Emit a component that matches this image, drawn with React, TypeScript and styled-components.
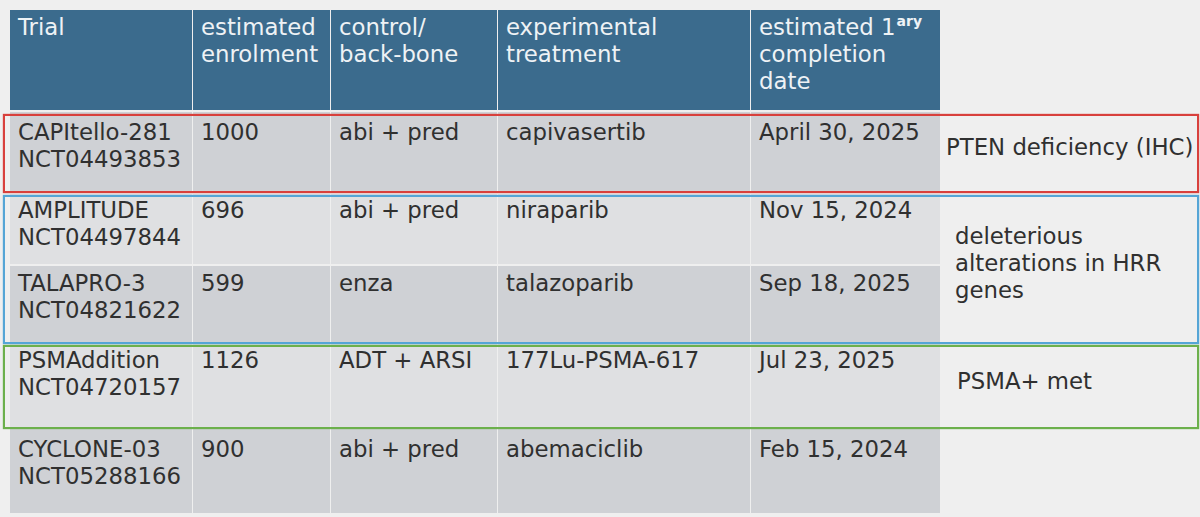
import React from "react";
import styled, { createGlobalStyle } from "styled-components";

const GlobalStyle = createGlobalStyle`
  html, body {
    margin: 0;
    padding: 0;
    background: #efefef;
  }
  body {
    font-family: "DejaVu Sans", Verdana, sans-serif;
    width: 1200px;
    height: 517px;
    overflow: hidden;
  }
`;

const Page = styled.div`
  padding: 10px 0 0 10px;
`;

const Grid = styled.div`
  display: grid;
  grid-template-columns: 182px 137px 166px 252px 189px 258px;
  grid-template-rows: 100px 80px 70px 76px 83px 84px;
  column-gap: 1px;
  row-gap: 2px;
  font-size: 22.8px;
  line-height: 27px;
`;

const HeadCell = styled.div<{ $col: number }>`
  grid-row: 1;
  grid-column: ${(p) => p.$col};
  background: #3b6b8d;
  color: #eef2f5;
  padding: 4px 8px;
  white-space: nowrap;
`;

const Cell = styled.div<{ $row: number; $col: number; $dark: boolean; $pt: number }>`
  grid-row: ${(p) => p.$row};
  grid-column: ${(p) => p.$col};
  background: ${(p) => (p.$dark ? "#cfd1d5" : "#dfe0e2")};
  color: #303030;
  padding: ${(p) => p.$pt}px 8px 0 8px;
  white-space: nowrap;
`;

const Sup = styled.sup`
  font-size: 14px;
  font-weight: bold;
  line-height: 0;
  vertical-align: 9px;
  margin-left: 1px;
`;

const Note = styled.div<{ $rows: string; $indent: number }>`
  grid-row: ${(p) => p.$rows};
  grid-column: 6;
  display: flex;
  align-items: center;
  padding: 0 0 9px ${(p) => p.$indent}px;
  color: #303030;
  white-space: nowrap;
`;

const Frame = styled.div<{ $rows: string; $color: string; $mt: number; $mb: number }>`
  grid-row: ${(p) => p.$rows};
  grid-column: 1 / -1;
  margin: ${(p) => p.$mt}px 0 ${(p) => p.$mb}px -7px;
  border: 2px solid ${(p) => p.$color};
  box-shadow: 0 0 1px ${(p) => p.$color};
  pointer-events: none;
  z-index: 1;
`;

type Row = {
  trial: string;
  nct: string;
  n: string;
  control: string;
  exp: string;
  date: string;
  pt: number;
};

const rows: Row[] = [
  { trial: "CAPItello-281", nct: "NCT04493853", n: "1000", control: "abi + pred", exp: "capivasertib", date: "April 30, 2025", pt: 7 },
  { trial: "AMPLITUDE", nct: "NCT04497844", n: "696", control: "abi + pred", exp: "niraparib", date: "Nov 15, 2024", pt: 3 },
  { trial: "TALAPRO-3", nct: "NCT04821622", n: "599", control: "enza", exp: "talazoparib", date: "Sep 18, 2025", pt: 4 },
  { trial: "PSMAddition", nct: "NCT04720157", n: "1126", control: "ADT + ARSI", exp: "177Lu-PSMA-617", date: "Jul 23, 2025", pt: 3 },
  { trial: "CYCLONE-03", nct: "NCT05288166", n: "900", control: "abi + pred", exp: "abemaciclib", date: "Feb 15, 2024", pt: 7 },
];

export default function App() {
  return (
    <Page>
      <GlobalStyle />
      <Grid>
        <HeadCell $col={1}>Trial</HeadCell>
        <HeadCell $col={2}>
          estimated
          <br />
          enrolment
        </HeadCell>
        <HeadCell $col={3}>
          control/
          <br />
          back-bone
        </HeadCell>
        <HeadCell $col={4}>
          experimental
          <br />
          treatment
        </HeadCell>
        <HeadCell $col={5}>
          estimated 1<Sup>ary</Sup>
          <br />
          completion
          <br />
          date
        </HeadCell>

        {rows.map((r, i) => {
          const row = i + 2;
          const dark = i % 2 === 0;
          return (
            <React.Fragment key={r.nct}>
              <Cell $row={row} $col={1} $dark={dark} $pt={r.pt}>
                {r.trial}
                <br />
                {r.nct}
              </Cell>
              <Cell $row={row} $col={2} $dark={dark} $pt={r.pt}>{r.n}</Cell>
              <Cell $row={row} $col={3} $dark={dark} $pt={r.pt}>{r.control}</Cell>
              <Cell $row={row} $col={4} $dark={dark} $pt={r.pt}>{r.exp}</Cell>
              <Cell $row={row} $col={5} $dark={dark} $pt={r.pt}>{r.date}</Cell>
            </React.Fragment>
          );
        })}

        <Note $rows="2" $indent={5}>PTEN deficiency (IHC)</Note>
        <Note $rows="3 / 5" $indent={14}>
          <div>
            deleterious
            <br />
            alterations in HRR
            <br />
            genes
          </div>
        </Note>
        <Note $rows="5" $indent={16}>PSMA+ met</Note>

        <Frame $rows="2" $color="#d8403c" $mt={2} $mb={-1} />
        <Frame $rows="3 / 5" $color="#55a5d6" $mt={1} $mb={-2} />
        <Frame $rows="5" $color="#6cb04c" $mt={1} $mb={-2} />
      </Grid>
    </Page>
  );
}
